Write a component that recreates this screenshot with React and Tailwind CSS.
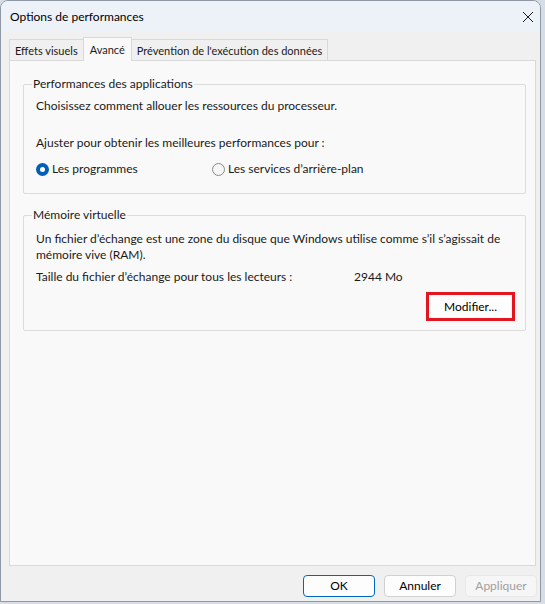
import React from 'react';

const font = { fontFamily: 'Lato, "Noto Sans", sans-serif' };

const Radio = ({ checked, label }) => (
  <label className="flex items-center gap-[3px]">
    {checked ? (
      <span className="w-[13px] h-[13px] rounded-full bg-[#005fb8] flex items-center justify-center">
        <span className="w-[5px] h-[5px] rounded-full bg-white" />
      </span>
    ) : (
      <span className="w-[13px] h-[13px] rounded-full border border-[#8a8a8a] bg-[#f6f6f6]" />
    )}
    <span>{label}</span>
  </label>
);

const GroupBox = ({ title, className, children }) => (
  <div className={`relative border border-[#dcdcdc] rounded-[2px] ${className}`}>
    <span className="absolute -top-[9px] left-[8px] px-[1px] bg-[#f9f9f9] leading-[16px]">{title}</span>
    {children}
  </div>
);

const Button = ({ children, primary, disabled }) => (
  <button
    className={`w-[72px] h-[22px] rounded-[4px] text-[12px] leading-none ${
      primary
        ? 'border border-[#0067c0] bg-[#fdfdfd] text-black'
        : disabled
        ? 'border border-[#e8e8e8] bg-[#f6f6f6] text-[#a0a0a0]'
        : 'border border-[#d0d0d0] bg-[#fdfdfd] text-black'
    }`}
  >
    {children}
  </button>
);

export default function App() {
  return (
    <div className="w-[545px] h-[604px] bg-[#d6dde6] overflow-hidden" style={font}>
      <div className="w-[541px] h-[602px] rounded-t-[8px] border border-[#8f98a3] bg-[#f0f0f0] flex flex-col text-[12px] text-[#1a1a1a] overflow-hidden">
        {/* title bar */}
        <div className="h-[31px] shrink-0 bg-[#edf2f8] flex items-center justify-between pl-[9px] pr-[6px]">
          <span className="text-[12px] text-black">Options de performances</span>
          <svg width="12" height="12" viewBox="0 0 12 12">
            <path d="M1 1 L11 11 M11 1 L1 11" stroke="#1a1a1a" strokeWidth="1" />
          </svg>
        </div>

        {/* tabs */}
        <div className="flex items-end pl-[8px] pt-[5px] h-[28px] shrink-0 text-[11px]">
          <div className="h-[21px] px-[5px] pt-[2px] border border-b-0 border-[#d9d9d9] bg-[#f0f0f0] flex items-center">Effets visuels</div>
          <div className="h-[24px] px-[6px] border border-b-0 border-[#d9d9d9] bg-[#f9f9f9] -mx-[1px] relative z-10 flex items-start pt-[4px] -mb-[1px]">Avancé</div>
          <div className="h-[21px] px-[5px] pt-[2px] border border-b-0 border-[#d9d9d9] bg-[#f0f0f0] flex items-center">Prévention de l'exécution des données</div>
        </div>

        {/* panel */}
        <div className="ml-[8px] w-[527px] h-[506px] border border-[#d9d9d9] bg-[#f9f9f9] pl-[13px] pr-[9px] pt-[23px]">
          <GroupBox title="Performances des applications" className="h-[110px] pl-[12px] pt-[12px]">
            <div>Choisissez comment allouer les ressources du processeur.</div>
            <div className="mt-[19px]">Ajuster pour obtenir les meilleures performances pour :</div>
            <div className="flex mt-[8px]">
              <div className="w-[176px]">
                <Radio checked label="Les programmes" />
              </div>
              <Radio label="Les services d’arrière-plan" />
            </div>
          </GroupBox>

          <GroupBox title="Mémoire virtuelle" className="mt-[21px] h-[116px] pl-[12px] pr-[10px] pt-[15px]">
            <div className="leading-[16px]">
              Un fichier d’échange est une zone du disque que Windows utilise comme s’il s’agissait de mémoire vive (RAM).
            </div>
            <div className="flex mt-[5px]">
              <span className="w-[318px]">Taille du fichier d’échange pour tous les lecteurs :</span>
              <span>2944 Mo</span>
            </div>
            <div className="flex justify-end mt-[6px]">
              <div className="border-[3px] border-[#e3151f] p-[1px]">
                <button className="w-[81px] h-[21px] rounded-[3px] bg-[#fdfdfd] text-[12px] text-black">Modifier...</button>
              </div>
            </div>
          </GroupBox>
        </div>

        {/* footer */}
        <div className="flex justify-end gap-[9px] pr-[3px] pt-[9px]">
          <Button primary>OK</Button>
          <Button>Annuler</Button>
          <Button disabled>Appliquer</Button>
        </div>
      </div>
    </div>
  );
}
